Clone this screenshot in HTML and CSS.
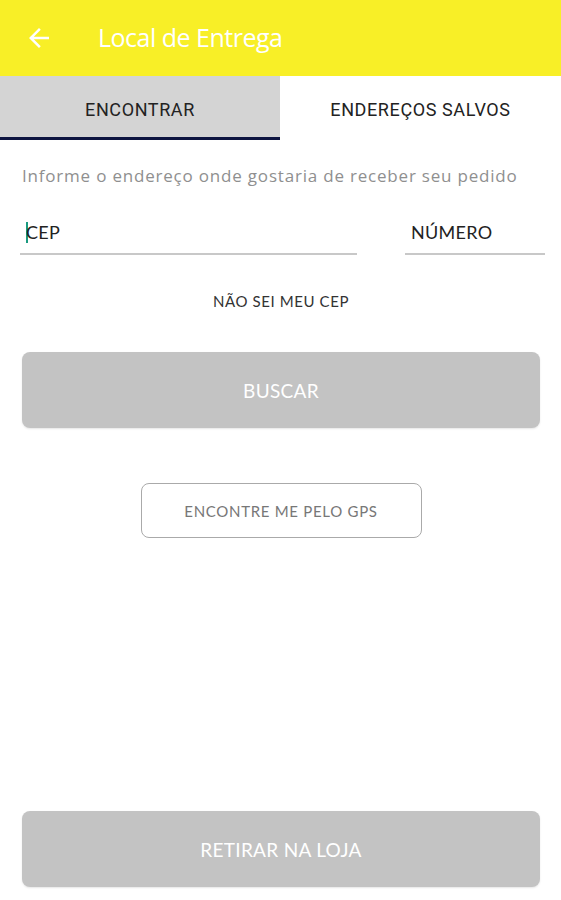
FILE: index.html
```html
<!DOCTYPE html>
<html lang="pt-BR">
<head>
    <meta charset="UTF-8">
    <title>Local de Entrega</title>
    <link rel="stylesheet" href="styles.css">
</head>
<body>
    <header class="toolbar">
        <button class="back" aria-label="Voltar">
            <svg width="30" height="30" viewBox="0 0 24 24"><path d="M20 11H7.83l5.59-5.59L12 4l-8 8 8 8 1.41-1.41L7.83 13H20v-2z" fill="#fff"/></svg>
        </button>
        <h1>Local de Entrega</h1>
    </header>

    <nav class="tabs">
        <div class="tab active">ENCONTRAR</div>
        <div class="tab">ENDEREÇOS SALVOS</div>
    </nav>

    <main class="content">
        <p class="hint">Informe o endereço onde gostaria de receber seu pedido</p>

        <div class="fields">
            <label class="field cep"><span class="caret"></span>CEP</label>
            <label class="field numero">NÚMERO</label>
        </div>

        <a class="link">NÃO SEI MEU CEP</a>

        <button class="primary">BUSCAR</button>

        <button class="outline">ENCONTRE ME PELO GPS</button>

        <div class="spacer"></div>

        <button class="primary">RETIRAR NA LOJA</button>
    </main>
</body>
</html>
```

FILE: styles.css
```css
body {
    margin: 0;
    width: 561px;
    height: 900px;
    display: flex;
    flex-direction: column;
    font-family: Lato, "Open Sans", sans-serif;
    background-color: white;
}
.toolbar {
    height: 76px;
    background-color: #f8ef27;
    display: flex;
    align-items: center;
    padding: 0 0 0 24px;
    box-sizing: border-box;
}
.toolbar .back {
    background: none;
    border: none;
    padding: 0;
    width: 30px;
    height: 30px;
    display: flex;
    align-items: center;
    justify-content: center;
}
.toolbar h1 {
    margin: 0 0 3px 44px;
    color: white;
    font-family: "Open Sans", sans-serif;
    font-weight: 400;
    font-size: 25px;
    letter-spacing: -0.5px;
}
.tabs {
    display: grid;
    grid-template-columns: 280px 1fr;
    height: 64px;
}
.tab {
    display: flex;
    align-items: center;
    justify-content: center;
    font-family: Roboto, sans-serif;
    font-size: 18px;
    letter-spacing: 0.6px;
    color: #222;
    padding-top: 2px;
}
.tab.active {
    background-color: #d4d4d4;
    border-bottom: 3px solid #0d1440;
    box-sizing: border-box;
    padding-top: 5px;
}
.content {
    flex: 1;
    display: flex;
    flex-direction: column;
    padding: 0 21px 13px 22px;
}
.hint {
    margin: 24px 0 0;
    color: #8f8f8f;
    font-family: "Open Sans", sans-serif;
    font-size: 17px;
    letter-spacing: 0.8px;
}
.fields {
    display: grid;
    grid-template-columns: 337px 140px;
    justify-content: space-between;
    margin: 34px -5px 0 -2px;
}
.field {
    font-size: 18px;
    letter-spacing: 0.3px;
    color: #222;
    padding: 0 0 10px 6px;
    border-bottom: 2px solid #c8c8c8;
    display: flex;
    align-items: center;
}
.caret {
    width: 2px;
    height: 21px;
    background-color: #1a9a80;
    margin-right: -2px;
}
.link {
    align-self: center;
    margin-top: 37px;
    font-size: 15px;
    letter-spacing: 0.6px;
    color: #333;
}
.primary {
    height: 76px;
    border: none;
    border-radius: 8px;
    background-color: #c3c3c3;
    color: white;
    font-family: Lato, sans-serif;
    font-size: 19px;
    letter-spacing: 0.3px;
    box-shadow: 0 1px 2px rgba(0,0,0,0.1);
}
.content > .primary:first-of-type {
    margin-top: 42px;
}
.outline {
    align-self: center;
    margin: 55px 0 0 0;
    width: 281px;
    height: 55px;
    border: 1px solid #aaa;
    border-radius: 8px;
    background-color: white;
    color: #777;
    font-family: Lato, sans-serif;
    font-size: 15px;
    letter-spacing: 0.7px;
}
.spacer {
    flex: 1;
}
```
